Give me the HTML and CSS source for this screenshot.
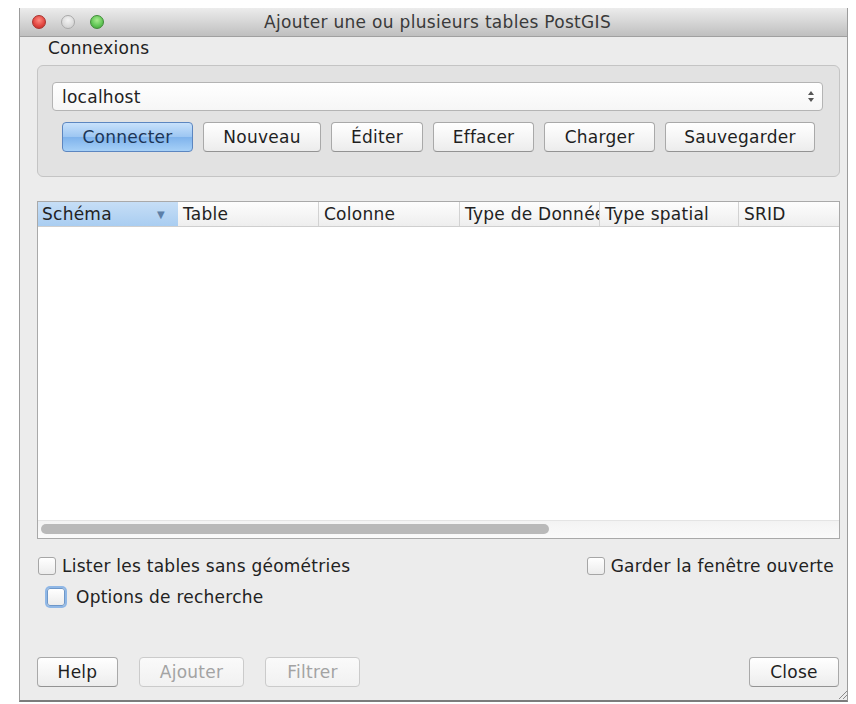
FILE: index.html
```html
<!DOCTYPE html>
<html lang="fr">
<head>
<meta charset="utf-8">
<title>Ajouter une ou plusieurs tables PostGIS</title>
<link rel="stylesheet" href="styles.css">
</head>
<body>
<div class="window">
  <div class="titlebar">
    <div class="lights">
      <span class="light close"></span>
      <span class="light minimize"></span>
      <span class="light zoom"></span>
    </div>
    <div class="title">Ajouter une ou plusieurs tables PostGIS</div>
  </div>

  <div class="content">
    <div class="group-label">Connexions</div>
    <div class="group">
      <div class="combo">
        <span class="combo-text">localhost</span>
        <svg class="combo-arrows" width="8" height="13" viewBox="0 0 8 13">
          <path d="M4 1 L7 5 L1 5 Z" fill="#555"/>
          <path d="M4 12 L7 8 L1 8 Z" fill="#555"/>
        </svg>
      </div>
      <div class="btn-row">
        <button class="btn default w-connect">Connecter</button>
        <button class="btn w-new">Nouveau</button>
        <button class="btn w-edit">Éditer</button>
        <button class="btn w-delete">Effacer</button>
        <button class="btn w-load">Charger</button>
        <button class="btn w-save">Sauvegarder</button>
      </div>
    </div>

    <div class="table">
      <div class="thead">
        <div class="th sorted"><span>Schéma</span><span class="sort">▼</span></div>
        <div class="th">Table</div>
        <div class="th sep">Colonne</div>
        <div class="th sep">Type de Données</div>
        <div class="th sep">Type spatial</div>
        <div class="th sep">SRID</div>
      </div>
      <div class="tbody"></div>
      <div class="hscroll"><div class="thumb"></div></div>
    </div>

    <div class="check-row">
      <label class="check"><span class="box"></span>Lister les tables sans géométries</label>
      <label class="check"><span class="box"></span>Garder la fenêtre ouverte</label>
    </div>
    <div class="check-row second">
      <label class="check focused"><span class="box"></span>Options de recherche</label>
    </div>

    <div class="footer">
      <div class="footer-left">
        <button class="btn w-help">Help</button>
        <button class="btn disabled w-add">Ajouter</button>
        <button class="btn disabled w-filter">Filtrer</button>
      </div>
      <button class="btn w-close">Close</button>
    </div>
  </div>

  <svg class="grip" width="12" height="12" viewBox="0 0 12 12">
    <path d="M11 3 L3 11 M11 7 L7 11" stroke="#8a8a8a" stroke-width="1"/>
  </svg>
</div>
</body>
</html>
```

FILE: styles.css
```css
* {
  box-sizing: border-box;
}

html, body {
  margin: 0;
  padding: 0;
  background: #ffffff;
}

body {
  font-family: "DejaVu Sans", "Liberation Sans", sans-serif;
  font-size: 17px;
  letter-spacing: 0.25px;
  color: #222222;
}

/* Dialog frame */
.window {
  position: relative;
  margin: 8px 0 0 19px;
  width: 829px;
  height: 694px;
  background: #ececec;
  border: 1px solid #9c9c9c;
  border-top: none;
  border-bottom: 2px solid #7c7c7c;
  display: flex;
  flex-direction: column;
}

.titlebar {
  position: relative;
  height: 29px;
  background: linear-gradient(#ececec, #d8d8d8 45%, #bfbfbf);
  border-bottom: 1px solid #a0a0a0;
  display: flex;
  align-items: center;
  justify-content: center;
}

.lights {
  position: absolute;
  left: 12px;
  top: 7px;
  display: flex;
  gap: 15px;
}

.light {
  width: 14px;
  height: 14px;
  border-radius: 50%;
}

.light.close {
  background: radial-gradient(circle at 50% 35%, #ff8a80, #e0443e 60%, #b52a25);
  border: 1px solid #a8322d;
}

.light.minimize {
  background: radial-gradient(circle at 50% 35%, #f4f4f4, #d6d6d6 70%);
  border: 1px solid #a9a9a9;
}

.light.zoom {
  background: radial-gradient(circle at 50% 35%, #a8ec8f, #5fc454 60%, #3d9a33);
  border: 1px solid #3f8c37;
}

.title {
  color: #3a3a3a;
  font-size: 17px;
  letter-spacing: 0.3px;
  padding-left: 8px;
}

.content {
  flex: 1;
  padding: 1px 7px 0 17px;
  display: flex;
  flex-direction: column;
}

.group-label {
  height: 20px;
  line-height: 20px;
  padding-left: 11px;
}

/* Connections group box */
.group {
  margin-top: 7px;
  height: 112px;
  background: #e2e2e2;
  border: 1px solid #c4c4c4;
  border-radius: 6px;
  padding: 16px 16px 0 14px;
}

.combo {
  height: 29px;
  background: linear-gradient(#ffffff, #f6f6f6);
  border: 1px solid #b4b4b4;
  border-radius: 4px;
  display: flex;
  align-items: center;
  justify-content: space-between;
  padding: 0 7px 0 9px;
}

.combo-arrows {
  display: block;
}

.btn-row {
  margin-top: 11px;
  padding-left: 10px;
  display: flex;
  gap: 10px;
}

.btn {
  font-family: inherit;
  font-size: 17px;
  letter-spacing: 0.25px;
  color: #1f1f1f;
  height: 30px;
  padding: 0;
  background: linear-gradient(#ffffff, #f4f4f4 60%, #ececec);
  border: 1px solid #a9a9a9;
  border-bottom-color: #939393;
  border-radius: 4px;
  text-align: center;
}

.btn.default {
  color: #1c3557;
  background: linear-gradient(#c8e1fb, #9cc6f2 50%, #7fb3ec 51%, #a6d0f7);
  border-color: #5c86c0;
}

.btn.disabled {
  color: #a3a3a3;
  background: linear-gradient(#fafafa, #f1f1f1);
  border-color: #cbcbcb;
}

.w-connect { width: 131px; }
.w-new { width: 118px; }
.w-edit { width: 92px; }
.w-delete { width: 101px; }
.w-load { width: 111px; }
.w-save { width: 150px; }
.w-help { width: 81px; }
.w-add { width: 105px; }
.w-filter { width: 95px; }
.w-close { width: 90px; }

/* Table view */
.table {
  margin-top: 24px;
  height: 338px;
  background: #ffffff;
  border: 1px solid #a9a9a9;
  display: flex;
  flex-direction: column;
}

.thead {
  height: 25px;
  display: grid;
  grid-template-columns: 140px 140px 141px 140px 139px 1fr;
  background: linear-gradient(#fdfdfd, #eeeeee);
  border-bottom: 1px solid #cfcfcf;
}

.th {
  display: flex;
  align-items: center;
  padding-left: 5px;
  white-space: nowrap;
  overflow: hidden;
  color: #222;
}

.th.sep {
  border-left: 1px solid #d2d2d2;
}

.th.sorted {
  justify-content: space-between;
  padding-left: 4px;
  padding-right: 13px;
  background: linear-gradient(#c6def6, #a9cdf1);
}

.sort {
  font-size: 10px;
  color: #5c7fa8;
}

.tbody {
  flex: 1;
}

.hscroll {
  height: 18px;
  background: linear-gradient(#f3f3f3, #fafafa);
  border-top: 1px solid #e4e4e4;
  padding: 3px 0 0 3px;
}

.thumb {
  width: 508px;
  height: 10px;
  border-radius: 5px;
  background: #b9b9b9;
}

/* Options */
.check-row {
  margin-top: 16px;
  height: 22px;
  display: flex;
  justify-content: space-between;
  padding-right: 6px;
}

.check-row.second {
  margin-top: 9px;
  padding-left: 9px;
}

.check {
  display: flex;
  align-items: center;
  gap: 6px;
  white-space: nowrap;
}

.check .box {
  width: 18px;
  height: 18px;
  margin-left: 1px;
  background: linear-gradient(#ffffff, #ececec);
  border: 1px solid #a6a6a6;
  border-radius: 3px;
}

.check.focused {
  gap: 11px;
}

.check.focused .box {
  border-color: #6e97c8;
  box-shadow: 0 0 0 2px #8fb7e6;
}

.footer {
  margin-top: 49px;
  display: flex;
  justify-content: space-between;
  padding-right: 1px;
}

.footer-left {
  display: flex;
  gap: 21px;
}

.grip {
  position: absolute;
  right: -1px;
  bottom: 0;
}
```
